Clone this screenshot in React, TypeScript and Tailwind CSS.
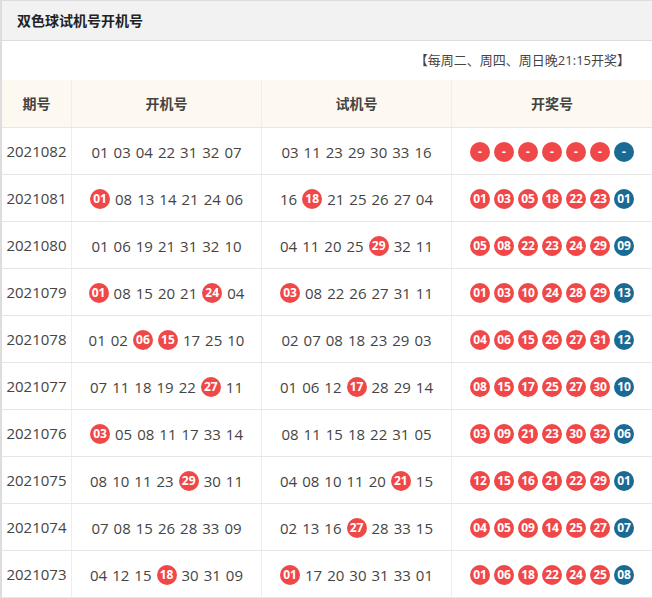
import React from "react";

type Row = { p: string; o: string; t: string; r: string };
const rows: Row[] = [
  { p: "2021082", o: "01 03 04 22 31 32 07", t: "03 11 23 29 30 33 16", r: "" },
  { p: "2021081", o: "01 08 13 14 21 24 06", t: "16 18 21 25 26 27 04", r: "01 03 05 18 22 23 01" },
  { p: "2021080", o: "01 06 19 21 31 32 10", t: "04 11 20 25 29 32 11", r: "05 08 22 23 24 29 09" },
  { p: "2021079", o: "01 08 15 20 21 24 04", t: "03 08 22 26 27 31 11", r: "01 03 10 24 28 29 13" },
  { p: "2021078", o: "01 02 06 15 17 25 10", t: "02 07 08 18 23 29 03", r: "04 06 15 26 27 31 12" },
  { p: "2021077", o: "07 11 18 19 22 27 11", t: "01 06 12 17 28 29 14", r: "08 15 17 25 27 30 10" },
  { p: "2021076", o: "03 05 08 11 17 33 14", t: "08 11 15 18 22 31 05", r: "03 09 21 23 30 32 06" },
  { p: "2021075", o: "08 10 11 23 29 30 11", t: "04 08 10 11 20 21 15", r: "12 15 16 21 22 29 01" },
  { p: "2021074", o: "07 08 15 26 28 33 09", t: "02 13 16 27 28 33 15", r: "04 05 09 14 25 27 07" },
  { p: "2021073", o: "04 12 15 18 30 31 09", t: "01 17 20 30 31 33 01", r: "01 06 18 22 24 25 08" },
];

const Ball = ({ n, blue }: { n: string; blue?: boolean }) => (
  <span
    className={`inline-flex h-[20px] w-[20px] items-center justify-center rounded-full text-[12px] font-bold leading-none text-white ${
      blue ? "bg-[#1b6a93]" : "bg-[#f04848]"
    }`}
  >
    {n}
  </span>
);

const Nums = ({ s, reds }: { s: string; reds: string[] }) => {
  const a = s.split(" ");
  return (
    <div className="flex items-center justify-center gap-[5px] pt-[2px] text-[15px] text-[#444]">
      {a.map((n, i) =>
        i < 6 && reds.includes(n) ? <Ball key={i} n={n} /> : <span key={i}>{n}</span>
      )}
    </div>
  );
};

export default function App() {
  return (
    <div
      className="w-[652px] h-[598px] overflow-hidden bg-white border-l-2 border-[#ddd]"
      style={{ fontFamily: '"Open Sans", "Noto Sans CJK SC", sans-serif' }}
    >
      <div className="h-[41px] flex items-center pl-[15px] bg-[#f2f2f2] border-y border-[#ddd] text-[14px] font-bold text-[#222]">
        双色球试机号开机号
      </div>
      <div className="h-[39px] flex items-center justify-end pr-[22px] text-[13px] text-[#444]">
        【每周二、周四、周日晚21:15开奖】
      </div>
      <div className="grid grid-cols-[70px_190px_190px_200px] h-[48px] bg-[#fdf9f1] text-[14px] font-bold text-[#444] border-b border-[#e6e6e6]">
        <div className="flex items-center justify-center border-r border-[#eee]">期号</div>
        <div className="flex items-center justify-center border-r border-[#eee]">开机号</div>
        <div className="flex items-center justify-center border-r border-[#eee]">试机号</div>
        <div className="flex items-center justify-center">开奖号</div>
      </div>
      {rows.map((row) => {
        const r = row.r ? row.r.split(" ") : [];
        const reds = r.slice(0, 6);
        return (
          <div key={row.p} className="grid grid-cols-[70px_190px_190px_200px] h-[47px] border-b border-[#e6e6e6]">
            <div className="flex items-start pt-[12px] justify-center border-r border-[#eee] text-[15px] text-[#444]">{row.p}</div>
            <div className="flex items-center justify-center border-r border-[#eee]"><Nums s={row.o} reds={reds} /></div>
            <div className="flex items-center justify-center border-r border-[#eee]"><Nums s={row.t} reds={reds} /></div>
            <div className="flex items-center justify-center gap-[4px] pt-[2px]">
              {r.length
                ? r.map((n, i) => <Ball key={i} n={n} blue={i === 6} />)
                : [0, 1, 2, 3, 4, 5, 6].map((i) => <Ball key={i} n="-" blue={i === 6} />)}
            </div>
          </div>
        );
      })}
    </div>
  );
}
